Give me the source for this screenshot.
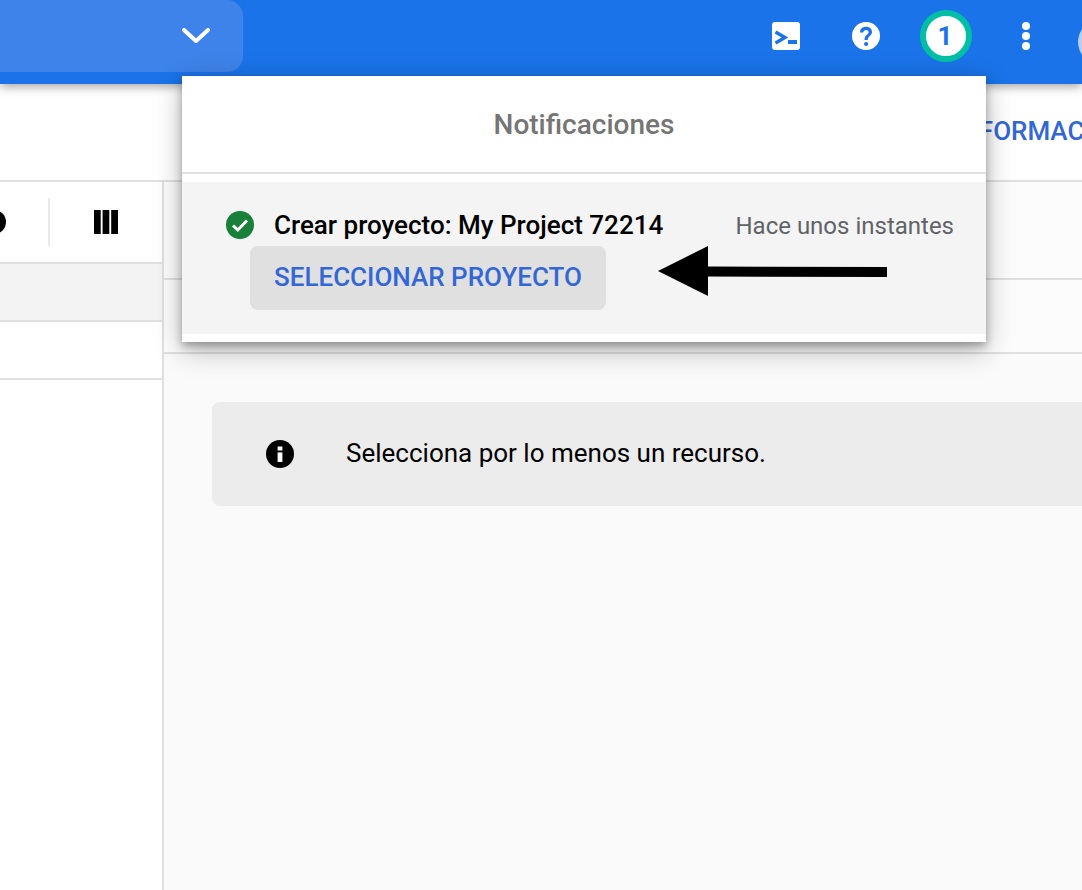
<div class="page">
  <header class="topbar">
    <div class="picker">
      <svg class="chev" width="28" height="16" viewBox="0 0 28 16"><path d="M2 2 L14 13 L26 2" fill="none" stroke="#fff" stroke-width="4" stroke-linecap="round" stroke-linejoin="round"/></svg>
    </div>
    <div class="actions">
      <svg class="a-shell" width="28" height="28" viewBox="0 0 28 28"><rect width="28" height="28" rx="3" fill="#fff"/><path d="M3.500 10.500 L13 16 L3.500 21.500" fill="none" stroke="#1a73e8" stroke-width="3.400" transform="translate(0 -.5)"/><rect x="16" y="18" width="9" height="4" fill="#1a73e8"/></svg>
      <svg class="a-help" width="28" height="28" viewBox="0 0 28 28"><circle cx="14" cy="14" r="14" fill="#fff"/><path d="M8 10.500 C8 6.800 10.600 4.700 14 4.700 C17.600 4.700 20 6.900 20 10 C20 13.800 15.700 14 15.700 18 H12.500 C12.500 12.800 16.600 12.600 16.600 10.200 C16.600 8.800 15.500 7.900 14 7.900 C12.500 7.900 11.400 8.900 11.300 10.500 Z" fill="#1a73e8"/><circle cx="14.100" cy="22" r="2.100" fill="#1a73e8"/></svg>
      <div class="badge">1</div>
      <div class="dots"><i></i><i></i><i></i></div>
      <div class="avatar"></div>
    </div>
  </header>

  <div class="subbar"><span class="info-link">INFORMACIÓN</span></div>

  <div class="body">
    <aside class="left">
      <div class="tools">
        <svg class="partial" width="24" height="24" viewBox="0 0 24 24"><circle cx="12" cy="12" r="12" fill="#000"/></svg>
        <span class="sep"></span>
        <svg class="cols" width="24" height="24" viewBox="0 0 24 24"><path d="M0 0h6.700v24H0zM8.600 0h6.700v24H8.600zM17.200 0H24v24h-6.800z" fill="#000"/></svg>
      </div>
      <div class="lrow shaded"></div>
      <div class="lrow"></div>
    </aside>
    <main class="right">
      <div class="rhead one"></div>
      <div class="rhead two"></div>
      <div class="notice">
        <svg width="28" height="28" viewBox="0 0 28 28"><circle cx="14" cy="14" r="14" fill="#000"/><rect x="11.600" y="6.500" width="4.800" height="4" fill="#fff"/><rect x="11.600" y="12.400" width="4.800" height="9.600" fill="#fff"/></svg>
        <span>Selecciona por lo menos un recurso.</span>
      </div>
    </main>
  </div>

  <section class="panel">
    <h2>Notificaciones</h2>
    <div class="item">
      <div class="line">
        <svg width="28" height="28" viewBox="0 0 28 28"><circle cx="14" cy="14" r="14" fill="#188038"/><path d="M7 14.500 L11.800 19 L21 9.500" fill="none" stroke="#fff" stroke-width="3"/></svg>
        <strong>Crear proyecto: My Project 72214</strong>
        <span class="when">Hace unos instantes</span>
      </div>
      <button><span>SELECCIONAR PROYECTO</span></button>
    </div>
  </section>

  <svg class="arrow" width="230" height="52" viewBox="0 0 230 52"><path d="M0 25 L50 0 V20.500 L229 21 V31 L50 30.500 V50 Z" fill="#000"/></svg>
</div>

<style>
  :global(body) { margin: 0; }
  .page { position: relative; width: 1082px; height: 890px; overflow: hidden; background: #fff; font-family: Roboto, "Liberation Sans", sans-serif; }
  .topbar { position: relative; z-index: 2; height: 84px; background: #1a73e8; display: flex; justify-content: space-between; box-shadow: 0 2px 10px rgba(0,0,0,.4); }
  .picker { width: 243px; height: 72px; box-sizing: border-box; background: #3e83ea; border-radius: 0 16px 16px 0; display: flex; align-items: center; justify-content: flex-end; padding: 0 33px 0 0; }
  .chev { display: block; }
  .actions { display: flex; align-items: flex-start; }
  .a-shell { margin: 22px 0 0 0; }
  .a-help { margin: 22px 0 0 52px; }
  .badge { margin: 10px 0 0 40px; width: 38px; padding-right: 2px; height: 40px; box-sizing: content-box; border: 6px solid #00bfa5; border-radius: 50%; background: #fff; color: #1a73e8; font-size: 26px; font-weight: 700; line-height: 40px; text-align: center; }
  .dots { margin: 22px 0 0 46px; width: 16px; display: flex; flex-direction: column; gap: 2px; }
  .dots i { display: block; width: 8px; height: 8px; margin-left: 4px; border-radius: 50%; background: #fff; }
  .avatar { margin: 20px -40px 0 44px; width: 44px; height: 44px; border-radius: 50%; background: #b7cdf6; flex: none; }
  .subbar { height: 96px; border-bottom: 2px solid #e0e0e0; display: flex; align-items: center; background: #fff; padding-left: 953px; box-sizing: content-box; overflow: hidden; }
  .info-link { color: #3367d6; font-size: 26px; font-weight: 500; white-space: nowrap; margin-top: -2px; }
  .body { display: flex; height: 708px; }
  .left { width: 162px; flex: none; border-right: 2px solid #e0e0e0; background: #fff; }
  .tools { height: 80px; border-bottom: 2px solid #e0e0e0; display: flex; align-items: center; box-sizing: content-box; }
  .partial { margin-left: -18px; }
  .sep { width: 2px; height: 48px; background: #eaeaea; margin-left: 42px; }
  .cols { margin-left: 44px; }
  .lrow { height: 56px; border-bottom: 2px solid #e0e0e0; background: #fff; }
  .shaded { background: #f3f3f3; }
  .right { flex: 1; background: #fafafa; min-width: 0; }
  .rhead { background: #fcfcfc; border-bottom: 2px solid #e0e0e0; }
  .rhead.one { height: 96px; }
  .rhead.two { height: 72px; }
  .notice { margin: 48px -40px 0 48px; height: 104px; background: #ececec; border-radius: 8px; display: flex; align-items: center; padding-left: 54px; color: #000; font-size: 26px; }
  .notice span { margin-top: -2px; }
  .notice svg { flex: none; margin-right: 52px; }
  .panel { position: absolute; z-index: 3; left: 182px; top: 76px; width: 804px; height: 266px; background: #fff; box-shadow: 0 4px 8px rgba(0,0,0,.28), 0 8px 26px rgba(0,0,0,.28); }
  h2 { margin: 0; height: 98px; box-sizing: border-box; border-bottom: 2px solid #e0e0e0; font-size: 28px; font-weight: 500; color: #757575; text-align: center; line-height: 98px; }
  .item { margin-top: 8px; height: 152px; box-sizing: border-box; background: #f4f4f4; padding: 29px 32px 0 44px; }
  .line { display: flex; align-items: center; height: 28px; }
  .line svg { flex: none; margin-right: 20px; }
  strong { font-size: 26px; font-weight: 500; color: #000; white-space: nowrap; }
  .when { margin-left: auto; margin-top: 2px; font-size: 24px; color: #5f6368; white-space: nowrap; }
  button { display: block; margin: 7px 0 0 24px; width: 356px; height: 64px; border: 0; border-radius: 8px; background: #e0e0e0; color: #3367d6; font-family: inherit; font-size: 26px; font-weight: 500; padding: 0 0 2px; }
  .arrow { position: absolute; z-index: 4; left: 658px; top: 246px; }
</style>
